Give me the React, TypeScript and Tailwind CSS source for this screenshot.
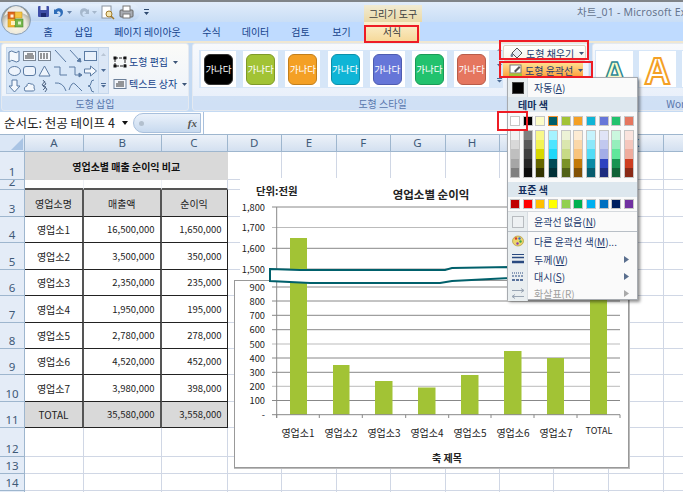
import React from "react";

const ic = "#5b7ba3";
const navy = "text-[#15428b]";

function Sh({ children }: { children: React.ReactNode }) {
  return (
    <svg width="15" height="14" viewBox="0 0 15 14" fill="none" stroke={ic} strokeWidth="1" className="block">
      {children}
    </svg>
  );
}

const shapes: React.ReactNode[] = [
  <path d="M2 3q3-2 5 0t5-1v10q-3 2-5 0t-5 1z" fill="#f4f8fd" />,
  <g><rect x="1.5" y="2.5" width="12" height="9" fill="#f7fafe" stroke="#7a8796" /><path d="M5 5h6M3 7h9M3 9h9" stroke="#333" /></g>,
  <g><rect x="1.5" y="2.5" width="12" height="9" fill="#f7fafe" stroke="#7a8796" /><path d="M4 4v6M7 4v6M10 4v6" stroke="#333" /></g>,
  <path d="M2 1l11 12" />,
  <g><path d="M2 1l11 12" /><path d="M13 13l-4-1 3-3z" fill={ic} /></g>,
  <rect x="1.5" y="2.5" width="12" height="9" fill="#e9f1fb" />,
  <ellipse cx="7.5" cy="7" rx="6" ry="4.5" fill="#eef4fc" />,
  <rect x="1.5" y="2.5" width="12" height="9" rx="2.5" fill="#eef4fc" />,
  <path d="M7.5 2l5.5 10H2z" fill="#eef4fc" />,
  <path d="M1 3h6v8h7" />,
  <g><path d="M1 3h6v8h5" /><path d="M14 11l-3-2v4z" fill={ic} /></g>,
  <path d="M1.5 5h6V2l6 5-6 5V9h-6z" fill="#f4f8fd" />,
  <path d="M5 1h5v6h3l-5.5 6L2 7h3z" fill="#f4f8fd" />,
  <path d="M3 12q-2-4 2-5q0-4 4-2q4 0 3 4q2 3-2 3z" fill="#f4f8fd" />,
  <path d="M6 1l3 4-3 2 4 3-2 3M8 2l-3 4 4 2-3 3" strokeWidth="0.9" stroke="#44597a" />,
  <path d="M2 4q8-1 11 8" />,
  <path d="M1 11q3-9 6-6t7 7" />,
  <path d="M11 1q-3 0-3 3t-3 3q3 0 3 3t3 3" />,
];

function Caret() {
  return (
    <svg width="5" height="3" viewBox="0 0 5 3" className="ml-[3px] shrink-0">
      <path d="M0 0h5L2.500 3z" fill="#3c5578" />
    </svg>
  );
}

function Ribbon() {
  return (
    <div className="flex h-[71px] shrink-0 gap-[3px] border-t-2 border-[#efe7d2] bg-[#c4daf3] pl-[1px]">
      <div className="flex h-[68px] w-[188px] shrink-0 flex-col overflow-hidden rounded-[3px] border border-[#e4e9f0] bg-gradient-to-b from-[#fbfbf8] to-[#eaf1fb]">
        <div className="flex flex-1 pl-[4px] pt-[3px]">
          <div className="flex h-[47px] w-[103px] shrink-0 border border-[#c5d7ec] bg-[#d8e7f8]">
            <div className="grid w-[92px] grid-cols-6 items-center justify-items-center">
              {shapes.map((s, i) => (
                <Sh key={i}>{s}</Sh>
              ))}
            </div>
            <div className="flex w-[10px] flex-col border-l border-[#c5d7ec] text-[#8da3bf]">
              {[0, 1, 2].map((i) => (
                <div key={i} className="flex flex-1 items-center justify-center border-b border-[#dce7f4] bg-[#dbe7f6]">
                  <svg width="7" height="6" viewBox="0 0 7 6">
                    {i === 0 ? <path d="M3.5 1L6 4H1z" fill="#b9c6d6" /> : i === 1 ? <path d="M1 2h5L3.500 5z" fill="#4d6c96" /> : <path d="M1 1h5v1H1zM1 3h5L3.500 5.500z" fill="#4d6c96" />}
                  </svg>
                </div>
              ))}
            </div>
          </div>
          <div className={`flex flex-col gap-[6px] pl-[4px] pt-[7px] text-[10px] leading-[16px] ${navy}`}>
            <div className="flex items-center gap-[2px]">
              <svg width="14" height="14" viewBox="0 0 14 14" className="shrink-0">
                <rect x="2" y="3" width="10" height="8" fill="none" stroke="#222" strokeDasharray="3 1" />
                <path d="M0.500 1.500h3v3h-3zM10.500 1.500h3v3h-3zM0.500 9.500h3v3h-3zM10.500 9.500h3v3h-3z" fill="#111" />
              </svg>
              <span className="whitespace-nowrap">도형 편집</span>
              <Caret />
            </div>
            <div className="flex items-center gap-[2px]">
              <svg width="14" height="14" viewBox="0 0 14 14" className="shrink-0">
                <rect x="1" y="2.500" width="12" height="9" fill="#f3f6fb" stroke="#6b7f98" />
                <path d="M5 5h6M3 7h8M3 9h8" stroke="#333" />
              </svg>
              <span className="whitespace-nowrap">텍스트 상자</span>
              <Caret />
            </div>
          </div>
        </div>
        <div className={`flex h-[14px] shrink-0 items-center justify-center bg-[#c6daf2] text-[10px] ${navy} opacity-70`}>도형 삽입</div>
      </div>

      <div className="flex h-[68px] w-[397px] shrink-0 flex-col overflow-hidden rounded-[3px] border border-[#e4e9f0] bg-gradient-to-b from-[#f7f9fc] to-[#e6eefa]">
        <div className="flex flex-1 pl-[6px]">
          <div className="relative mt-[6px] flex h-[38px] w-[304px] shrink-0 items-center gap-[7.2px] bg-[#d6e6f8] pl-[2px]">
            {[
              ["bg-[#000000]", "border-[#333333]"],
              ["bg-[#a2c335]", "border-[#7f9a29]"],
              ["bg-[#f4a025]", "border-[#c27f1c]"],
              ["bg-[#0fb5d6]", "border-[#0c90aa]"],
              ["bg-[#6676d8]", "border-[#4e5cb0]"],
              ["bg-[#22c26e]", "border-[#1a9a57]"],
              ["bg-[#e5765f]", "border-[#b85c49]"],
            ].map(([b, c], i) => (
              <div key={i} className="flex h-[36px] w-[35px] shrink-0 items-center justify-center bg-white">
                <div className={`flex h-[31px] w-[29px] items-center justify-center whitespace-nowrap rounded-[6px] border text-[9.500px] text-white ${b} ${c}`}>가나다</div>
              </div>
            ))}
            <div className="absolute right-0 top-[-8px] flex h-[46px] w-[8px] flex-col">
              {[0, 1, 2].map((i) => (
                <div key={i} className="flex flex-1 items-center justify-center">
                  <svg width="7" height="6" viewBox="0 0 7 6">
                    {i === 0 ? <path d="M3.500 1L6 4H1z" fill="#8d9db3" /> : i === 1 ? <path d="M1 2h5L3.500 5z" fill="#4d6c96" /> : <path d="M1 1h5v1H1zM1 3h5L3.500 5.500z" fill="#4d6c96" />}
                  </svg>
                </div>
              ))}
            </div>
          </div>
          <div className="flex flex-col pt-[1px] text-[10px] text-[#1a3a70]">
            <div className="flex h-[16px] w-[83px] items-center gap-[2px] rounded-[2px] border border-[#dcd6c2] bg-gradient-to-b from-[#ffffff] to-[#f8f4e6] pl-[6px]">
              <svg width="14" height="13" viewBox="0 0 14 13" className="shrink-0">
                <path d="M2 6l5-5 5 5-5 5z" fill="#e8edf3" stroke="#555" />
                <path d="M2 6c-2 2-2 4 0 4s1-3 0-4z" fill="#6b7f98" />
              </svg>
              <span className="whitespace-nowrap">도형 채우기</span>
              <Caret />
            </div>
            <div className="mt-[2px] flex h-[15px] w-[80px] items-center gap-[2px] bg-gradient-to-b from-[#ffdf8f] to-[#fb9a2c] pl-[6px]">
              <svg width="14" height="13" viewBox="0 0 14 13" className="shrink-0">
                <rect x="1" y="1" width="11" height="8" fill="#fff" stroke="#777" />
                <path d="M5 7l5-5 1.500 1.500-5 5z" fill="#555" />
                <rect x="0" y="9.500" width="13" height="3" fill="#a2c335" />
              </svg>
              <span className="whitespace-nowrap">도형 윤곽선</span>
              <Caret />
            </div>
          </div>
        </div>
        <div className={`flex h-[14px] shrink-0 items-center justify-center bg-[#c6daf2] pr-[16px] text-[10px] ${navy} opacity-70`}>도형 스타일</div>
      </div>

      <div className="flex h-[68px] w-[95px] shrink-0 flex-col overflow-hidden rounded-l-[3px] border border-[#e4e9f0] bg-gradient-to-b from-[#f7f9fc] to-[#e6eefa]">
        <div className="flex flex-1 items-start pl-[2px] pt-[6px]">
          <div className="flex h-[38px] w-[92px] shrink-0 items-center gap-[6px] overflow-hidden bg-[#d6e6f8] pl-[1px]">
            <div className="flex h-[36px] w-[37px] shrink-0 items-center justify-center bg-white pt-[8px] font-['Liberation_Sans',sans-serif] text-[32px] font-bold leading-none text-[#fdfdc8] [-webkit-text-stroke:1.5px_#2e8a96]">A</div>
            <div className="flex h-[36px] w-[37px] shrink-0 items-center justify-center bg-white pt-[6px] font-['Liberation_Sans',sans-serif] text-[36px] font-bold leading-none text-white [-webkit-text-stroke:2px_#f4a025]">A</div>
            <div className="h-[36px] w-[37px] shrink-0 bg-white" />
          </div>
        </div>
        <div className={`flex h-[14px] shrink-0 items-center justify-end whitespace-nowrap bg-[#c6daf2] pr-[1px] text-[10px] ${navy} opacity-70`}>Wor</div>
      </div>
    </div>
  );
}

function TitleBar() {
  return (
    <div className="flex h-[20px] shrink-0 items-center bg-gradient-to-b from-[#e1ecfa] to-[#c9def6]">
      <div className="ml-[30px] flex h-[17px] w-[110px] shrink-0 items-center rounded-r-full bg-gradient-to-b from-[#e6f0fc] to-[#bcd4f1] pl-[8px]">
        <svg width="100" height="16" viewBox="0 0 100 16">
          <rect x="0" y="2" width="11" height="11" rx="1" fill="#3f4fa8" />
          <rect x="2.500" y="2" width="6" height="4" fill="#e8eefa" />
          <rect x="3" y="9" width="5" height="4" fill="#1d2a70" />
          <path d="M17 6c3-3 8-2 8 2s-3 5-5 5c3-1 3-4 2-5-1-1-3-1-3 1l2 1h-5V5z" fill="#2f6db8" />
          <path d="M29 7h5l-2.500 3z" fill="#6a86ac" />
          <path d="M50 6c-3-3-8-2-8 2s3 5 5 5c-3-1-3-4-2-5 1-1 3-1 3 1l-2 1h5V5z" fill="#a5b7cc" />
          <path d="M54 7h5l-2.500 3z" fill="#a5b7cc" />
          <rect x="64" y="2" width="9" height="12" fill="#fff" stroke="#8a94a0" />
          <circle cx="71" cy="10" r="3" fill="#f4e6b0" stroke="#a0792a" />
          <path d="M73 12l3 3" stroke="#a0792a" strokeWidth="1.500" />
          <rect x="82" y="6" width="13" height="7" rx="1" fill="#a9adb4" stroke="#666" />
          <rect x="85" y="2" width="7" height="5" fill="#fff" stroke="#777" />
          <rect x="85" y="10" width="7" height="4" fill="#fff" stroke="#777" />
        </svg>
      </div>
      <svg width="6" height="7" viewBox="0 0 6 7" className="ml-[4px] shrink-0">
        <path d="M0 0h5v1H0zM0 3h5L2.500 6z" fill="#2d4a70" />
      </svg>
      <div className="ml-[214px] flex h-[17px] w-[58px] shrink-0 items-center justify-center self-end bg-gradient-to-b from-[#f1ebd3] to-[#ead9a6] text-[10px] text-[#3e3e3e]">그리기 도구</div>
      <div className="ml-[155px] whitespace-nowrap font-['Noto_Sans',sans-serif] text-[10.500px] tracking-[0.2px] text-[#66758e]">
        <span className="font-['Noto_Sans_CJK_KR',sans-serif]">차트</span>_01 - Microsoft Exce
      </div>
    </div>
  );
}

function Tabs() {
  const tabs: [string, string][] = [
    ["홈", "w-[24px]"],
    ["삽입", "w-[47px]"],
    ["페이지 레이아웃", "w-[81px]"],
    ["수식", "w-[47px]"],
    ["데이터", "w-[41px]"],
    ["검토", "w-[49px]"],
    ["보기", "w-[33px]"],
  ];
  return (
    <div className={`flex h-[19px] shrink-0 items-center bg-[#bfdbff] pl-[36px] text-[10px] ${navy}`}>
      {tabs.map(([t, w]) => (
        <div key={t} className={`${w} shrink-0 whitespace-nowrap text-center`}>{t}</div>
      ))}
      <div className="ml-[6px] flex h-[19px] w-[56px] shrink-0 items-center justify-center bg-gradient-to-b from-[#fbf0cf] to-[#f6d99a] text-[#333]">서식</div>
    </div>
  );
}

function FormulaBar() {
  return (
    <div className="flex h-[23px] shrink-0 items-stretch border-b border-[#9eb6ce] bg-[#d5e4f6]">
      <div className="flex w-[133px] shrink-0 items-center bg-white pl-[4px] text-[12.500px] text-[#222]">
        <span className="whitespace-nowrap">순서도: 천공 테이프 4</span>
        <svg width="7" height="4" viewBox="0 0 7 4" className="ml-auto mr-[4px] shrink-0">
          <path d="M0 0h6L3 4z" fill="#111" />
        </svg>
      </div>
      <div className="flex w-[70px] shrink-0 items-center bg-white">
        <div className="flex h-[20px] w-[68px] items-center justify-between rounded-l-full border border-[#a9c0dc] bg-gradient-to-b from-[#eaf1fa] to-[#c8daef] pl-[5px] pr-[3px]">
          <div className="h-[5px] w-[5px] rounded-full bg-[#b3c0ce]" />
          <span className="font-['Liberation_Serif',serif] text-[11px] font-bold italic text-[#555]">fx</span>
        </div>
      </div>
      <div className="flex-1 border-l border-[#a9c0dc] bg-white" />
    </div>
  );
}

const rowH = [28, 10, 27, 26, 27, 26, 27, 26, 26, 27, 26, 29, 17, 17, 17];
const tbl: [string, string, string][] = [
  ["영업소명", "매출액", "순이익"],
  ["영업소1", "16,500,000", "1,650,000"],
  ["영업소2", "3,500,000", "350,000"],
  ["영업소3", "2,350,000", "235,000"],
  ["영업소4", "1,950,000", "195,000"],
  ["영업소5", "2,780,000", "278,000"],
  ["영업소6", "4,520,000", "452,000"],
  ["영업소7", "3,980,000", "398,000"],
  ["TOTAL", "35,580,000", "3,558,000"],
];
const colLetters = ["A", "B", "C", "D", "E", "F", "G", "H", "I", "J", "K", "L"];

function Sheet() {
  const grid = "border-r border-b border-[#d0d7e5]";
  return (
    <div className="grid grid-cols-[25px_59px_77.500px_66px_54.500px_55px_53.500px_55px_54px_54px_55px_55px_60px] grid-rows-[17px_28px_10px_27px_26px_27px_26px_27px_26px_26px_27px_26px_29px_17px_17px_17px] text-[10px] text-[#222]">
      <div className="relative border-b border-r border-[#9eb6ce] bg-[#dbe7f6]">
        <svg width="12" height="12" viewBox="0 0 12 12" className="absolute bottom-[1px] right-[1px]">
          <path d="M12 0v12H0z" fill="#a9c4e4" />
        </svg>
      </div>
      {colLetters.map((c, i) => (
        <div key={i} className="flex items-center justify-center border-b border-r border-[#9eb6ce] bg-gradient-to-b from-[#edf2f9] to-[#d3e0f0] font-['Noto_Sans',sans-serif] text-[11.500px] text-[#3f5a78]">{c}</div>
      ))}
      {rowH.map((_, r) => {
        const n = r + 1;
        return (
          <React.Fragment key={r}>
            <div className="flex items-end justify-center overflow-hidden border-b border-r border-[#9eb6ce] bg-[#e4ecf7] font-['Noto_Sans',sans-serif] text-[11.500px] leading-[14px] text-[#3f5a78]">{n}</div>
            {n === 1 ? (
              <div className="col-span-3 flex items-center justify-center bg-[#d9d9d9] font-bold text-[#111]">영업소별 매출 순이익 비교</div>
            ) : n === 2 ? (
              <>
                <div className="border-b-2 border-r border-b-[#555] border-r-[#eef1f6]" />
                <div className="border-b-2 border-r border-b-[#555] border-r-[#eef1f6]" />
                <div className="border-b-2 border-b-[#555] border-r border-r-[#d0d7e5]" />
              </>
            ) : n <= 11 ? (
              tbl[n - 3].map((t, c) => {
                const gray = n === 3 || n === 11;
                return (
                  <div
                    key={c}
                    className={`flex items-center overflow-hidden whitespace-nowrap border-b border-r border-[#222] ${gray ? "bg-[#d9d9d9]" : "bg-white"} ${
                      c === 0 || n === 3 ? "justify-center" : "justify-end pr-[5px] text-[9.500px]"
                    } ${c < 2 ? "border-r-2 border-r-[#555]" : ""}`}
                  >
                    {t}
                  </div>
                );
              })
            ) : (
              <>
                <div className={grid} />
                <div className={grid} />
                <div className={grid} />
              </>
            )}
            {Array.from({ length: 9 }).map((_, i) => (
              <div key={i} className={grid} />
            ))}
          </React.Fragment>
        );
      })}
    </div>
  );
}

function Chart() {
  const lines: [number, string][] = [
    [207, "#888"], [227.5, "#bbb"], [248.3, "#888"], [269, "#999"], [287, "#888"], [301, "#888"], [315.3, "#888"],
    [329.7, "#888"], [344, "#bbb"], [358, "#888"], [372.3, "#888"], [386.3, "#bbb"], [400.5, "#888"],
  ];
  const labels = ["1,800", "1,700", "1,600", "1,500", "900", "800", "700", "600", "500", "400", "300", "200", "100"];
  const bars: [number, number, number][] = [
    [290, 17, 238], [333, 16.5, 365], [375, 17.5, 381], [418, 17.5, 387.5], [461, 17.5, 375], [504, 17.5, 351], [547, 17, 358], [590, 17, 240],
  ];
  const ticks = [276.7, 319.3, 362.3, 405.7, 448.7, 491, 534, 577, 620];
  const cats = ["영업소1", "영업소2", "영업소3", "영업소4", "영업소5", "영업소6", "영업소7"];
  return (
    <svg width="410" height="304" viewBox="228 170 410 304" className="absolute left-[228px] top-[170px]" fontFamily="'Noto Sans CJK KR', sans-serif" fill="#222">
      <rect x="240" y="178" width="389" height="110" fill="#fff" />
      <rect x="234.500" y="280.500" width="394" height="187" fill="#fff" stroke="#999" strokeWidth="1" />
      <path d="M234 468.500h395.500M629.500 280v189" stroke="#bbb" strokeWidth="1" fill="none" />
      <text x="256" y="195" fontSize="10.400" fontWeight="700">단위:전원</text>
      <text x="431" y="199" fontSize="11.500" fontWeight="700" textAnchor="middle">영업소별 순이익</text>
      {lines.map(([y, c], i) => (
        <g key={i}>
          <line x1="272" x2="620" y1={y} y2={y} stroke={c} strokeWidth="1" />
          <text x="265" y={y + 3.500} fontSize="9.300" textAnchor="end">{labels[i]}</text>
        </g>
      ))}
      <text x="265" y="418" fontSize="9.300" textAnchor="end">-</text>
      <line x1="276.700" x2="276.700" y1="207" y2="418" stroke="#888" />
      {bars.map(([x, w, t], i) => (
        <rect key={i} x={x} y={t} width={w} height={414.700 - t} fill="#a2c335" />
      ))}
      <line x1="272" x2="620" y1="414.700" y2="414.700" stroke="#888" />
      {ticks.map((x) => (
        <line key={x} x1={x} x2={x} y1="414.700" y2="418" stroke="#888" />
      ))}
      {cats.map((c, i) => (
        <text key={c} x={298 + i * 43} y="437" fontSize="10" textAnchor="middle">{c}</text>
      ))}
      <text x="599" y="434" fontSize="9" textAnchor="middle">TOTAL</text>
      <text x="447" y="462" fontSize="10" fontWeight="700" textAnchor="middle">축 제목</text>
      <path d="M270 269L300 270L445 270L452 268L510 267L510 278L452 281L440 283L310 283L270 281Z" fill="#fff" stroke="#00606b" strokeWidth="2" />
    </svg>
  );
}

const theme = ["#ffffff", "#000000", "#fdfdc8", "#005f6b", "#a2c335", "#f4a025", "#0fb5d6", "#6676d8", "#22c26e", "#e5765f"];
const shades = [
  ["#f2f2f2", "#d9d9d9", "#bfbfbf", "#a6a6a6", "#7f7f7f"],
  ["#7f7f7f", "#595959", "#3f3f3f", "#262626", "#0d0d0d"],
  ["#f8f88a", "#f4f454", "#d8d800", "#666600", "#333300"],
  ["#a5f3ff", "#4fe5ff", "#20d8f8", "#004a55", "#003036"],
  ["#ecf2d6", "#dae6ae", "#c7da86", "#7a9227", "#526218"],
  ["#fdebd3", "#fbd7a8", "#f9c37c", "#c37909", "#825106"],
  ["#c5f3fc", "#8be8f9", "#51dcf6", "#0b8aa4", "#075c6d"],
  ["#e0e4f7", "#c1c8ef", "#a3ade7", "#2d43c0", "#1e2d80"],
  ["#caf7de", "#95efbc", "#60e79b", "#189352", "#106237"],
  ["#fae3dd", "#f5c7bd", "#efac9d", "#cd3e21", "#8a2916"],
];
const standard = ["#c00000", "#ff0000", "#ffc000", "#ffff00", "#92d050", "#00b050", "#00b0f0", "#0070c0", "#002060", "#7030a0"];

function Row({ icon, h, arrow, dim, children }: { icon: React.ReactNode; h: string; arrow?: boolean; dim?: boolean; children: React.ReactNode }) {
  return (
    <div className={`flex ${h} shrink-0 items-stretch`}>
      <div className="flex w-[20px] shrink-0 items-center justify-center border-r border-[#d8dde2] bg-[#e9eef0]">{icon}</div>
      <div className={`flex flex-1 items-center pl-[6px] pr-[8px] text-[10px] ${dim ? "text-[#a0a0a0]" : "text-[#1d3a6e]"}`}>
        <span className="whitespace-nowrap">{children}</span>
        {arrow && (
          <svg width="5" height="7" viewBox="0 0 5 7" className="ml-auto shrink-0">
            <path d="M0 0l5 3.500L0 7z" fill={dim ? "#aaa" : "#5a6f8e"} />
          </svg>
        )}
      </div>
    </div>
  );
}

function ColorMenu() {
  return (
    <div className="absolute left-[507px] top-[77px] flex h-[223px] w-[131px] flex-col border border-[#a7abb0] bg-[#fafafa] shadow-[2px_2px_3px_rgba(0,0,0,0.45)]">
      <Row h="h-[19px]" icon={<div className="h-[12px] w-[12px] border border-[#444] bg-black" />}>
        자동(<u>A</u>)
      </Row>
      <div className="flex h-[15px] shrink-0 items-center bg-[#dde7ee] pl-[10px] text-[10px] font-bold text-[#15305e]">테마 색</div>
      <div className="flex shrink-0 justify-between pl-[2px] pr-[3px] pt-[4px]">
        {theme.map((c, i) => (
          <div
            key={c}
            style={{ backgroundColor: c }}
            className={`h-[10px] w-[10px] border ${i === 3 ? "border-[#f29436]" : "border-[#c6c6c6]"}`}
          />
        ))}
      </div>
      <div className="flex shrink-0 justify-between pl-[2px] pr-[3px] pt-[4px]">
        {shades.map((col, i) => (
          <div key={i} className="flex h-[48px] w-[10px] flex-col border border-[#c6c6c6]">
            {col.map((c) => (
              <div key={c} style={{ backgroundColor: c }} className="flex-1" />
            ))}
          </div>
        ))}
      </div>
      <div className="mt-[4px] flex h-[15px] shrink-0 items-center bg-[#dde7ee] pl-[10px] text-[10px] font-bold text-[#15305e]">표준 색</div>
      <div className="flex shrink-0 justify-between pl-[2px] pr-[3px] pt-[2px]">
        {standard.map((c) => (
          <div key={c} style={{ backgroundColor: c }} className="h-[10px] w-[10px] border border-[#c6c6c6]" />
        ))}
      </div>
      <div className="mt-[2px] h-px shrink-0 bg-[#d5d9dd]" />
      <Row h="h-[19px]" icon={<div className="h-[12px] w-[12px] border border-[#b8bcc0] bg-[#eef1f3]" />}>
        윤곽선 없음(<u>N</u>)
      </Row>
      <div className="h-px shrink-0 bg-[#b8bfc6]" />
      <Row
        h="h-[18px]"
        icon={
          <svg width="12" height="12" viewBox="0 0 12 12">
            <ellipse cx="6" cy="6" rx="5.500" ry="5" fill="#ecd66c" stroke="#a88c2c" strokeWidth="0.600" />
            <circle cx="4" cy="3.500" r="1.200" fill="#d83a2a" />
            <circle cx="7.500" cy="3.500" r="1.200" fill="#3a70c8" />
            <circle cx="8.500" cy="6.500" r="1.200" fill="#3aa84a" />
            <circle cx="5.500" cy="8.500" r="1.200" fill="#8a3ab0" />
          </svg>
        }
      >
        다른 윤곽선 색(<u>M</u>)...
      </Row>
      <Row
        h="h-[18px]"
        arrow
        icon={
          <svg width="12" height="10" viewBox="0 0 12 10">
            <path d="M0 0.500h12" stroke="#2a4a80" />
            <path d="M0 3.500h12" stroke="#2a4a80" strokeWidth="1.500" />
            <path d="M0 8h12" stroke="#2a4a80" strokeWidth="2.500" />
          </svg>
        }
      >
        두께(<u>W</u>)
      </Row>
      <Row
        h="h-[17px]"
        arrow
        icon={
          <svg width="12" height="10" viewBox="0 0 12 10">
            <path d="M0 1h12" stroke="#2a4a80" strokeDasharray="1 1" />
            <path d="M0 4h12" stroke="#2a4a80" strokeDasharray="2 1" />
            <path d="M0 8h12" stroke="#2a4a80" strokeDasharray="3 1" strokeWidth="1.500" />
          </svg>
        }
      >
        대시(<u>S</u>)
      </Row>
      <Row
        h="h-[16px]"
        arrow
        dim
        icon={
          <svg width="12" height="11" viewBox="0 0 12 11" fill="none" stroke="#9aa6b4">
            <path d="M0 2.500h12M9 0.500l3 2-3 2M0 8.500h12M3 6.500l-3 2 3 2" />
          </svg>
        }
      >
        화살표(<u>R</u>)
      </Row>
    </div>
  );
}

function Orb() {
  return (
    <svg width="32" height="32" viewBox="0 0 32 32" className="absolute left-0 top-[4px]">
      <defs>
        <radialGradient id="orb" cx="50%" cy="70%" r="65%">
          <stop offset="0%" stopColor="#fff8e0" />
          <stop offset="55%" stopColor="#e9e6dc" />
          <stop offset="100%" stopColor="#8a8b7e" />
        </radialGradient>
      </defs>
      <circle cx="16" cy="16" r="14.500" fill="url(#orb)" stroke="#8aa0b8" />
      <path d="M4 12q12-8 24 0q-4-10-12-10T4 12z" fill="#fff" opacity="0.800" />
      <rect x="8" y="8" width="7" height="7" fill="#e0691c" stroke="#b04a10" strokeWidth="0.600" />
      <rect x="15" y="8" width="7" height="6" fill="#f6c343" stroke="#c89a20" strokeWidth="0.600" />
      <rect x="8" y="15" width="7" height="8" fill="#f2b632" stroke="#c89a20" strokeWidth="0.600" />
      <rect x="15" y="15" width="8" height="8" fill="#74b64c" stroke="#4c8a30" strokeWidth="0.600" />
      <rect x="10.500" y="10.500" width="3" height="3" fill="#fff3d8" />
      <rect x="11" y="17" width="4" height="4" fill="#fff1c0" />
      <rect x="18" y="17.500" width="3" height="3" fill="#dff0c8" />
    </svg>
  );
}

const red = "absolute border-2 border-[#ee1c25]";

export default function App() {
  return (
    <div className="relative flex h-[492px] w-[683px] flex-col overflow-hidden bg-white font-['Noto_Sans_CJK_KR',sans-serif]">
      <div className="h-[2px] shrink-0 bg-[#808488]" />
      <TitleBar />
      <Tabs />
      <Ribbon />
      <FormulaBar />
      <Sheet />
      <Orb />
      <Chart />
      <ColorMenu />
      <div className={`${red} left-[364px] top-[25px] h-[18px] w-[55px]`} />
      <div className={`${red} left-[499px] top-[40px] h-[20px] w-[90px]`} />
      <div className={`${red} left-[499px] top-[61px] h-[17px] w-[94px]`} />
      <div className={`${red} left-[497px] top-[111px] h-[20px] w-[31px]`} />
    </div>
  );
}
